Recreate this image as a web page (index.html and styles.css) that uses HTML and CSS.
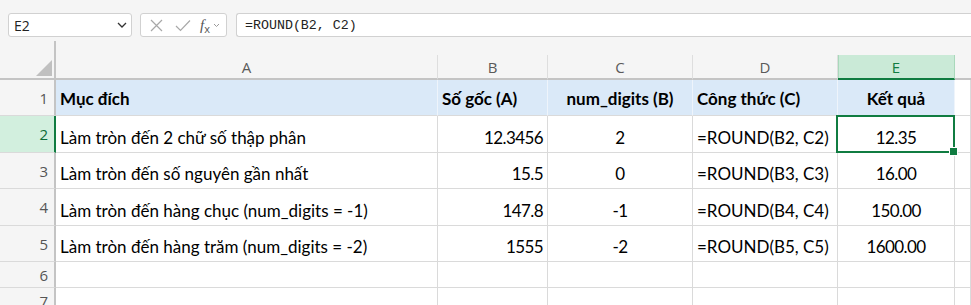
FILE: index.html
```html
<!DOCTYPE html>
<html lang="vi">
<head>
<meta charset="utf-8">
<title>ROUND</title>
<link rel="stylesheet" href="styles.css">
</head>
<body>
<div class="app">
  <div class="fbar">
    <div class="namebox">
      <span class="nb-text">E2</span>
      <svg class="nb-chev" width="10" height="6" viewBox="0 0 10 6"><path d="M1 1 L5 5 L9 1" fill="none" stroke="#333" stroke-width="1.3"/></svg>
    </div>
    <div class="fbtns">
      <svg class="ic-x" width="13" height="13" viewBox="0 0 13 13"><path d="M1 1 L12 12 M12 1 L1 12" stroke="#a8a8a8" stroke-width="1.2" fill="none"/></svg>
      <svg class="ic-ok" width="16" height="13" viewBox="0 0 16 13"><path d="M1 7 L5.5 11.5 L15 1.5" stroke="#a8a8a8" stroke-width="1.2" fill="none"/></svg>
      <span class="fx"><i>f</i><span class="fx-x">x</span></span>
      <svg class="ic-chev" width="7" height="5" viewBox="0 0 7 5"><path d="M1 1 L3.5 3.5 L6 1" fill="none" stroke="#9a9a9a" stroke-width="1"/></svg>
    </div>
    <div class="finput">=ROUND(B2, C2)</div>
  </div>

  <div class="sheet">
    <div class="corner"><span class="tri"></span></div>
    <div class="strip"></div>
    <div class="ch">A</div>
    <div class="ch">B</div>
    <div class="ch">C</div>
    <div class="ch">D</div>
    <div class="ch sel">E</div>
    <div class="ch last"></div>

    <div class="rh">1</div>
    <div class="c hd">Mục đích</div>
    <div class="c hd">Số gốc (A)</div>
    <div class="c hd ctr">num_digits (B)</div>
    <div class="c hd">Công thức (C)</div>
    <div class="c hd ctr">Kết quả</div>
    <div class="c"></div>

    <div class="rh sel">2</div>
    <div class="c">Làm tròn đến 2 chữ số thập phân</div>
    <div class="c r num">12.3456</div>
    <div class="c ctr num">2</div>
    <div class="c">=ROUND(B2, C2)</div>
    <div class="c ctr num active">12.35</div>
    <div class="c"></div>

    <div class="rh">3</div>
    <div class="c">Làm tròn đến số nguyên gần nhất</div>
    <div class="c r num">15.5</div>
    <div class="c ctr num">0</div>
    <div class="c">=ROUND(B3, C3)</div>
    <div class="c ctr num">16.00</div>
    <div class="c"></div>

    <div class="rh">4</div>
    <div class="c">Làm tròn đến hàng chục (num_digits = -1)</div>
    <div class="c r num">147.8</div>
    <div class="c ctr num">-1</div>
    <div class="c">=ROUND(B4, C4)</div>
    <div class="c ctr num">150.00</div>
    <div class="c"></div>

    <div class="rh">5</div>
    <div class="c">Làm tròn đến hàng trăm (num_digits = -2)</div>
    <div class="c r num">1555</div>
    <div class="c ctr num">-2</div>
    <div class="c">=ROUND(B5, C5)</div>
    <div class="c ctr num">1600.00</div>
    <div class="c"></div>

    <div class="rh">6</div>
    <div class="c"></div><div class="c"></div><div class="c"></div><div class="c"></div><div class="c"></div><div class="c"></div>

    <div class="rh">7</div>
    <div class="c"></div><div class="c"></div><div class="c"></div><div class="c"></div><div class="c"></div><div class="c"></div>
  </div>
</div>
</body>
</html>
```

FILE: styles.css
```css
* { box-sizing: border-box; }
html, body { margin: 0; padding: 0; }
body {
  background: #f5f5f5;
  width: 971px;
  height: 305px;
  overflow: hidden;
  font-family: "Lato", "Noto Sans", sans-serif;
}

.fbar {
  display: flex;
  align-items: stretch;
  height: 24px;
  margin: 13px 0 4px 8px;
}
.namebox {
  width: 124px;
  background: #fff;
  border: 1px solid #d1d1d1;
  border-radius: 3px;
  display: flex;
  align-items: center;
  justify-content: space-between;
  padding: 0 4px 0 5px;
  margin-right: 8px;
}
.nb-text {
  font-family: "Open Sans", "Noto Sans", sans-serif;
  font-size: 14px;
  color: #222;
}
.fbtns {
  width: 87px;
  background: #fff;
  border: 1px solid #d1d1d1;
  border-radius: 3px;
  display: flex;
  align-items: center;
  padding-left: 9px;
  margin-right: 9px;
}
.ic-x { margin-right: 12px; }
.ic-ok { margin-right: 9px; }
.fx {
  font-family: "Liberation Serif", serif;
  color: #555;
  font-size: 15px;
  line-height: 1;
  margin-right: 3px;
  display: inline-flex;
  align-items: flex-end;
}
.fx i { font-style: italic; }
.fx-x {
  font-family: "Open Sans", sans-serif;
  font-size: 11px;
  position: relative;
  top: 1px;
}
.finput {
  flex: 1;
  background: #fff;
  border: 1px solid #d1d1d1;
  border-right: none;
  border-radius: 3px 0 0 3px;
  font-family: "Liberation Mono", monospace;
  font-size: 13.3px;
  color: #222;
  display: flex;
  align-items: center;
  padding-left: 8px;
}

.sheet {
  display: grid;
  grid-template-columns: 56px 382px 110px 145px 145px 117px 1fr;
  grid-template-rows: 14px 25px 36px 37px 36px 37px 36px 26px 26px;
}
.corner {
  grid-row: 1 / 3;
  grid-column: 1;
  border-right: 2px solid #c4c4c4;
  border-bottom: 2px solid #c4c4c4;
  position: relative;
}
.tri {
  position: absolute;
  right: 2px;
  bottom: 2px;
  width: 16px;
  height: 16px;
  background: #c0c0c0;
  clip-path: polygon(100% 0, 100% 100%, 0 100%);
}
.strip {
  grid-row: 1;
  grid-column: 2 / 8;
}
.ch {
  border-right: 1px solid #dedede;
  border-bottom: 2px solid #c4c4c4;
  display: flex;
  align-items: center;
  justify-content: center;
  font-family: "Open Sans", "Noto Sans", sans-serif;
  font-size: 15px;
  color: #5a5a5a;
  padding-top: 1px;
}
.ch.sel {
  background: #caead7;
  color: #107c41;
  border-bottom-color: #107c41;
  border-right-color: #a9d8bb;
  box-shadow: inset 1px 0 0 #a9d8bb;
}
.ch.last { border-right: none; }

.rh {
  border-right: 2px solid #c4c4c4;
  border-bottom: 1px solid #dadada;
  display: flex;
  align-items: center;
  justify-content: flex-end;
  padding-right: 6px;
  font-family: "Open Sans", "Noto Sans", sans-serif;
  font-size: 15px;
  color: #555;
}
.rh.sel {
  background: #d2efde;
  color: #0e6b37;
  border-right-color: #107c41;
}

.c {
  background: #fff;
  border-right: 1px solid #dadada;
  border-bottom: 1px solid #dadada;
  display: flex;
  align-items: flex-end;
  padding: 0 4px 4px 4px;
  font-size: 17px;
  line-height: 20px;
  color: #000;
  white-space: nowrap;
}
.c.num { letter-spacing: -0.6px; }
.c.hd {
  background: #dae9f8;
  border-right-color: #eef4fb;
  font-weight: bold;
  align-items: center;
  padding-bottom: 0;
  padding-top: 3px;
}
.c.r { justify-content: flex-end; }
.c.ctr { justify-content: center; }
.c.active { position: relative; }
.c.active::after {
  content: "";
  position: absolute;
  left: -2px;
  top: -1px;
  right: -1px;
  bottom: -1px;
  border: 2px solid #107c41;
}
.c.active::before {
  content: "";
  position: absolute;
  right: -4px;
  bottom: -4px;
  width: 7px;
  height: 7px;
  background: #107c41;
  border: 1px solid #fff;
  z-index: 2;
}
```
